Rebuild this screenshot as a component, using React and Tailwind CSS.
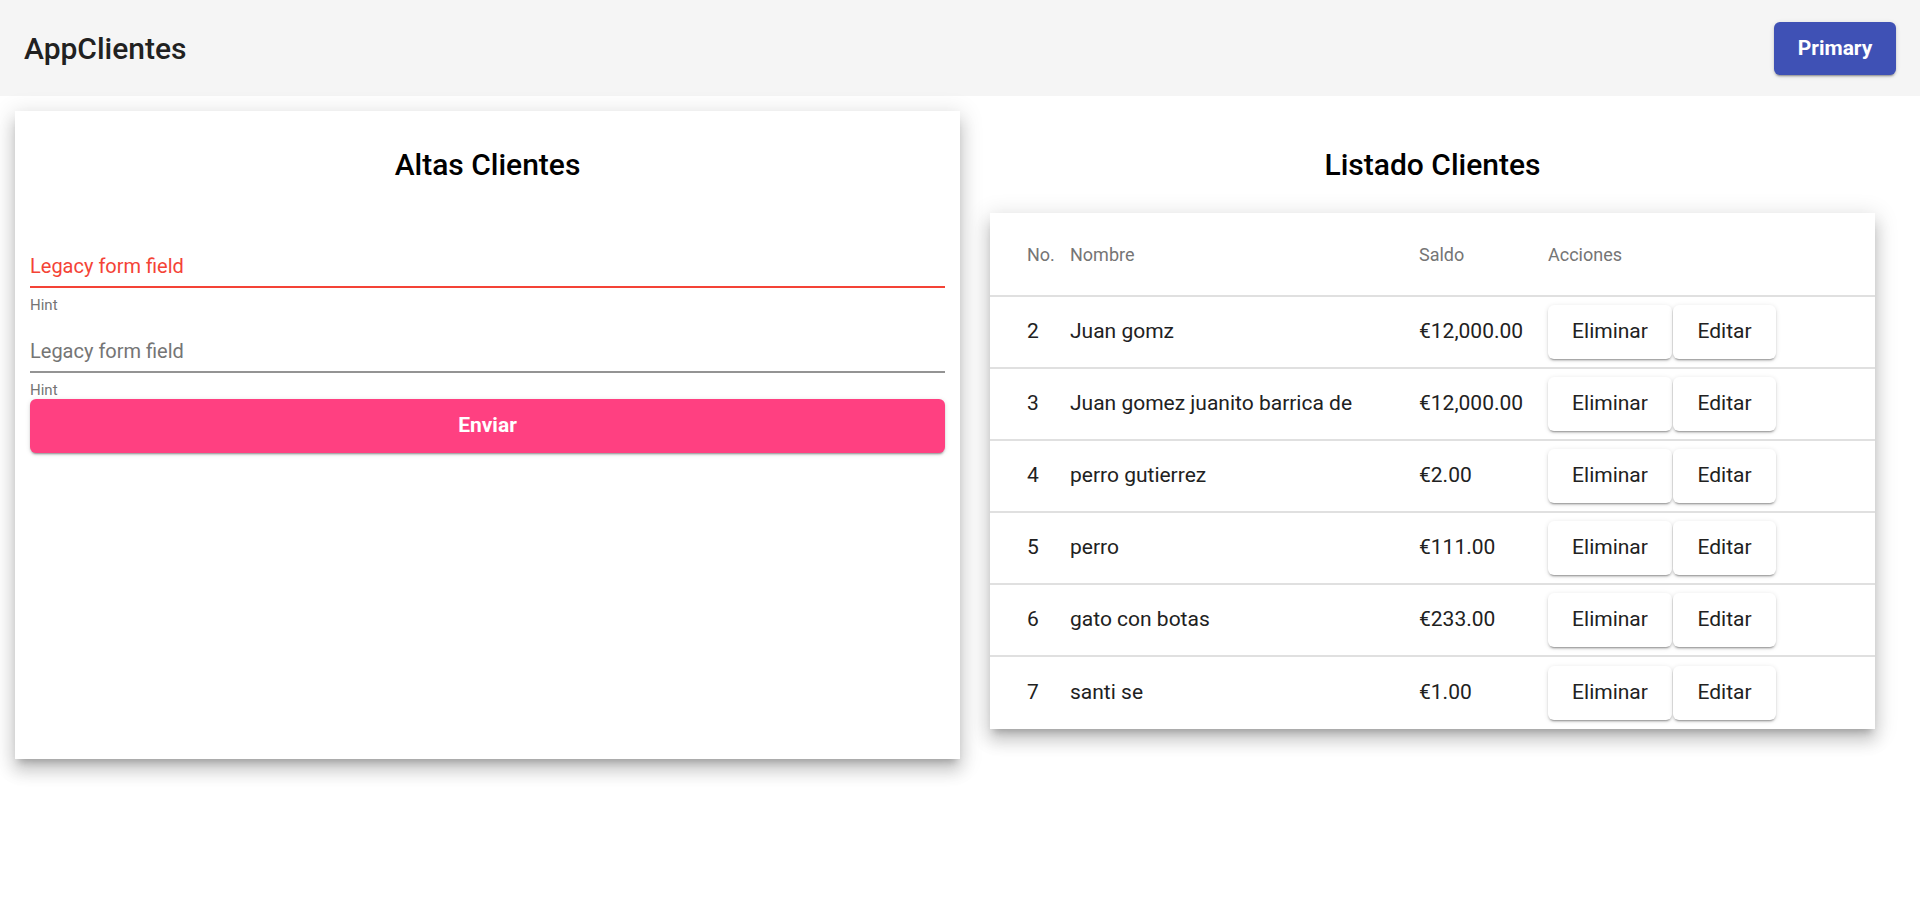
import React from 'react';

const clientes = [
  { id: 2, nombre: 'Juan gomz', saldo: '€12,000.00' },
  { id: 3, nombre: 'Juan gomez juanito barrica de', saldo: '€12,000.00' },
  { id: 4, nombre: 'perro gutierrez', saldo: '€2.00' },
  { id: 5, nombre: 'perro', saldo: '€111.00' },
  { id: 6, nombre: 'gato con botas', saldo: '€233.00' },
  { id: 7, nombre: 'santi se', saldo: '€1.00' },
];

const raised =
  'shadow-[0_3px_1px_-2px_rgba(0,0,0,0.2),0_2px_2px_0_rgba(0,0,0,0.14),0_1px_5px_0_rgba(0,0,0,0.12)]';

const cardShadow =
  'shadow-[0_7px_7px_-4px_rgba(0,0,0,0.2),0_12px_15px_1px_rgba(0,0,0,0.14),0_4px_21px_3px_rgba(0,0,0,0.12)]';

const FormField = ({ error }) => (
  <div>
    <div
      className={`h-[36px] pt-[2px] border-b-2 text-[20px] leading-[24px] ${
        error ? 'border-[#f44336] text-[#f44336]' : 'border-[#949494] text-[#757575]'
      }`}
    >
      Legacy form field
    </div>
    <div className="mt-[8px] text-[15px] leading-[18px] text-[#757575]">Hint</div>
  </div>
);

const ClientRow = ({ cliente, last }) => (
  <div
    className={`grid grid-cols-[43px_349px_129px_1fr] items-center pl-[37px] h-[72px] text-[21px] text-[#212121] ${
      last ? '' : 'border-b-2 border-[#e0e0e0]'
    }`}
  >
    <span>{cliente.id}</span>
    <span className="whitespace-nowrap">{cliente.nombre}</span>
    <span>{cliente.saldo}</span>
    <div className="flex gap-[1px]">
      <button className={`w-[124px] h-[54px] rounded-[6px] bg-white ${raised}`}>Eliminar</button>
      <button className={`w-[103px] h-[54px] rounded-[6px] bg-white ${raised}`}>Editar</button>
    </div>
  </div>
);

export default function App() {
  return (
    <div className="min-h-[913px] bg-white font-['Roboto','Liberation_Sans',sans-serif]">
      {/* Toolbar */}
      <header className="h-[96px] bg-[#f5f5f5] flex items-center justify-between px-[24px]">
        <h1 className="text-[30px] font-medium text-[#212121]">AppClientes</h1>
        <button
          className={`mt-[1px] w-[122px] h-[53px] rounded-[6px] bg-[#3f51b5] text-white text-[21px] font-bold ${raised}`}
        >
          Primary
        </button>
      </header>

      <main className="flex pt-[15px] pl-[15px]">
        {/* Altas */}
        <section className={`w-[945px] h-[648px] bg-white px-[15px] pt-[36px] ${cardShadow}`}>
          <h2 className="text-center text-[30px] leading-[36px] font-medium text-black">Altas Clientes</h2>
          <div className="mt-[69px]">
            <FormField error />
            <div className="mt-[23px]">
              <FormField />
            </div>
            <button
              className={`w-full h-[54px] rounded-[6px] bg-[#ff4081] text-white text-[21px] font-bold ${raised}`}
            >
              Enviar
            </button>
          </div>
        </section>

        {/* Listado */}
        <section className="ml-[30px] w-[885px] pt-[36px]">
          <h2 className="text-center text-[30px] leading-[36px] font-medium text-black">Listado Clientes</h2>
          <div className={`mt-[30px] bg-white ${cardShadow}`}>
            <div className="grid grid-cols-[43px_349px_129px_1fr] items-center pl-[37px] h-[84px] border-b-2 border-[#e0e0e0] text-[18px] text-[#757575]">
              <span>No.</span>
              <span>Nombre</span>
              <span>Saldo</span>
              <span>Acciones</span>
            </div>
            {clientes.map((c, i) => (
              <ClientRow key={c.id} cliente={c} last={i === clientes.length - 1} />
            ))}
          </div>
        </section>
      </main>
    </div>
  );
}
